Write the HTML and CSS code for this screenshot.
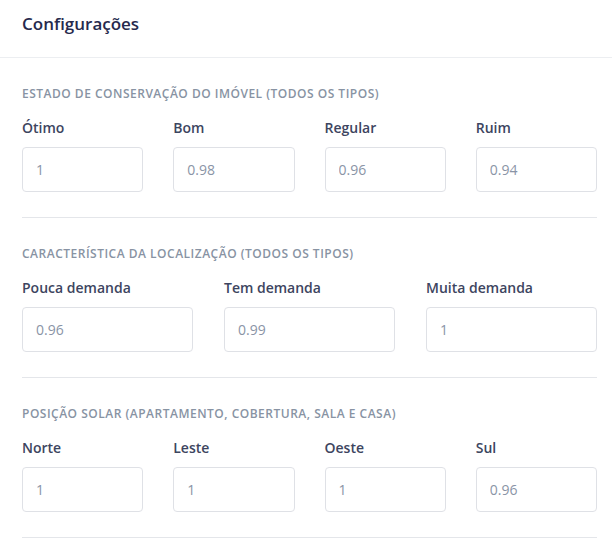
FILE: index.html
```html
<!DOCTYPE html>
<html lang="pt-BR">
<head>
<meta charset="utf-8">
<title>Configurações</title>
<link rel="stylesheet" href="styles.css">
</head>
<body>
<div class="page">
  <header class="header">
    <h1 class="title">Configurações</h1>
  </header>
  <div class="content">
    <section class="section">
      <h2 class="section-title">Estado de conservação do imóvel (todos os tipos)</h2>
      <div class="grid grid-4">
        <label class="field"><span class="field-label">Ótimo</span><input class="input" type="text" value="1"></label>
        <label class="field"><span class="field-label">Bom</span><input class="input" type="text" value="0.98"></label>
        <label class="field"><span class="field-label">Regular</span><input class="input" type="text" value="0.96"></label>
        <label class="field"><span class="field-label">Ruim</span><input class="input" type="text" value="0.94"></label>
      </div>
    </section>
    <section class="section">
      <h2 class="section-title">Característica da localização (todos os tipos)</h2>
      <div class="grid grid-3">
        <label class="field"><span class="field-label">Pouca demanda</span><input class="input" type="text" value="0.96"></label>
        <label class="field"><span class="field-label">Tem demanda</span><input class="input" type="text" value="0.99"></label>
        <label class="field"><span class="field-label">Muita demanda</span><input class="input" type="text" value="1"></label>
      </div>
    </section>
    <section class="section">
      <h2 class="section-title">Posição solar (apartamento, cobertura, sala e casa)</h2>
      <div class="grid grid-4">
        <label class="field"><span class="field-label">Norte</span><input class="input" type="text" value="1"></label>
        <label class="field"><span class="field-label">Leste</span><input class="input" type="text" value="1"></label>
        <label class="field"><span class="field-label">Oeste</span><input class="input" type="text" value="1"></label>
        <label class="field"><span class="field-label">Sul</span><input class="input" type="text" value="0.96"></label>
      </div>
    </section>
  </div>
</div>
</body>
</html>
```

FILE: styles.css
```css
* { box-sizing: border-box; }
html, body {
  margin: 0;
  padding: 0;
  background: #ffffff;
}
body {
  font-family: "Open Sans", "Noto Sans", sans-serif;
  color: #3e4559;
}
.page {
  width: 612px;
}
.header {
  padding: 12px 22px 21px;
  border-bottom: 1px solid #eceef1;
}
.title {
  margin: 0;
  font-size: 17px;
  line-height: 24px;
  font-weight: 600;
  color: #262a4d;
}
.content {
  padding: 0 15px 0 22px;
}
.section {
  padding: 28px 0 25px;
  border-bottom: 1px solid #e4e6ea;
}
.section-title {
  margin: 0 0 16px;
  font-size: 12px;
  line-height: 16px;
  font-weight: 600;
  text-transform: uppercase;
  letter-spacing: 0.5px;
  color: #8893a3;
}
.grid {
  display: grid;
}
.grid-4 {
  grid-template-columns: repeat(4, 1fr);
  column-gap: 30px;
}
.grid-3 {
  grid-template-columns: repeat(3, 1fr);
  column-gap: 31px;
}
.field {
  display: flex;
  flex-direction: column;
  gap: 9px;
}
.field-label {
  font-size: 14px;
  line-height: 20px;
  font-weight: 600;
  color: #3d4560;
}
.input {
  display: block;
  width: 100%;
  height: 45px;
  margin: 0;
  padding: 0 13px;
  border: 1px solid #dfe1e6;
  border-radius: 4px;
  background: #ffffff;
  font-family: "Open Sans", "Noto Sans", sans-serif;
  font-size: 14px;
  color: #8a94a6;
  outline: none;
}
```
